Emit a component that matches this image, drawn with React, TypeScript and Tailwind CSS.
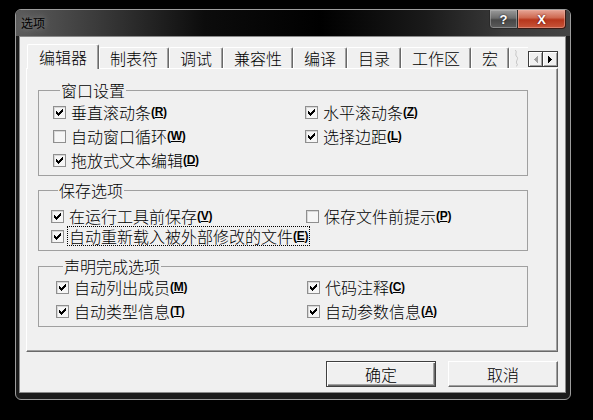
import React from "react";

const CJK = "font-['Noto_Sans_CJK_SC',sans-serif] font-light";

function Check({ checked }: { checked: boolean }) {
  return (
    <span className="flex h-[13px] w-[13px] shrink-0 items-center justify-center border border-[#8f8f8f] bg-[#f6f6f6] shadow-[inset_1px_1px_0_#d8d8d8]">
      {checked ? (
        <svg width="7" height="7" viewBox="0 0 7 7" shapeRendering="crispEdges">
          <rect x="6" y="0" width="1" height="1" fill="#000" />
          <rect x="5" y="1" width="2" height="1" fill="#000" />
          <rect x="0" y="2" width="1" height="1" fill="#000" />
          <rect x="4" y="2" width="3" height="1" fill="#000" />
          <rect x="0" y="3" width="2" height="1" fill="#000" />
          <rect x="3" y="3" width="3" height="1" fill="#000" />
          <rect x="0" y="4" width="5" height="1" fill="#000" />
          <rect x="1" y="5" width="3" height="1" fill="#000" />
          <rect x="2" y="6" width="1" height="1" fill="#000" />
        </svg>
      ) : null}
    </span>
  );
}

function Mn({ k }: { k: string }) {
  return (
    <span className="font-['Liberation_Sans',Arial,sans-serif] text-[12px] font-bold leading-none tracking-[-0.3px]">
      (<span className="underline underline-offset-[1px]">{k}</span>)
    </span>
  );
}

type O = { label: string; k: string; checked: boolean; focus?: boolean } | null;

function Opt({ o, h }: { o: O; h: string }) {
  if (!o) return <div className={h} />;
  return (
    <div className={"flex items-center whitespace-nowrap " + h}>
      <Check checked={o.checked} />
      <span
        className={
          "ml-[3px] flex shrink-0 items-center whitespace-nowrap px-[1px] text-[16px] leading-[16px] " +
          (o.focus ? "h-[20px] border border-dotted border-black" : "h-[18px] border border-transparent")
        }
      >
        {o.label}
        <Mn k={o.k} />
      </span>
    </div>
  );
}

const tabs = [
  { t: "编辑器", sel: true },
  { t: "制表符" },
  { t: "调试" },
  { t: "兼容性" },
  { t: "编译" },
  { t: "目录" },
  { t: "工作区" },
  { t: "宏" },
];

export default function App() {
  return (
    <div className={"h-[420px] w-[593px] overflow-hidden bg-black pl-[15px] pt-[9px] text-black " + CJK}>
      <div className="flex h-[391px] w-[556px] flex-col overflow-hidden rounded-[6px] border border-[#9c9c9c] bg-[#1c1c1c]">
        {/* title bar */}
        <div className="flex h-[26px] shrink-0 items-start bg-[linear-gradient(90deg,#5c5c5c_0%,#3c3c3c_14%,#0c0c0c_34%,#000_55%,#1a1a1a_74%,#3a3a3a_88%,#444_100%)]">
          <div className="flex h-[26px] items-center pl-[5px] text-[12px] font-normal leading-[12px] text-black [text-shadow:0_0_6px_#9a9a9a]">
            选项
          </div>
          <div className="ml-auto mr-[4px] -mt-[1px] flex">
            <div className="flex h-[20px] w-[29px] items-center justify-center rounded-bl-[4px] border border-[#2a2a2a] bg-[linear-gradient(180deg,#9a9a9a_0%,#6c6c6c_45%,#474747_55%,#5c5c5c_100%)] shadow-[inset_0_0_0_1px_#b8b8b880] font-['Liberation_Sans',sans-serif] text-[13px] font-bold leading-none text-white [text-shadow:0_0_2px_#000]">
              ?
            </div>
            <div className="flex h-[20px] w-[48px] items-center justify-center rounded-br-[4px] border border-l-0 border-[#3a1a14] bg-[linear-gradient(180deg,#e6a596_0%,#cf6a52_42%,#b7361c_55%,#c8553a_100%)] shadow-[inset_0_0_0_1px_#f0b0a080] font-['Liberation_Sans',sans-serif] text-[13px] font-bold leading-none text-white [text-shadow:0_0_2px_#400]">
              X
            </div>
          </div>
        </div>
        {/* client */}
        <div className="ml-[3px] h-[357px] w-[547px] border border-[#8a8a8a] bg-[#f0f0f0] pl-[6px] pt-[7px]">
          <div className="w-[532px]">
            {/* tab header */}
            <div className="flex h-[24px] items-end pl-[1px]">
              {tabs.map((tab) =>
                tab.sel ? (
                  <div
                    key={tab.t}
                    className="relative z-10 -mb-px flex h-[25px] items-center rounded-t-[2px] border-l border-r border-t border-l-white border-r-[#696969] border-t-white bg-[#f0f0f0] px-[11px] text-[16px] leading-[16px] shadow-[inset_-1px_0_0_#a0a0a0]"
                  >
                    {tab.t}
                  </div>
                ) : (
                  <div
                    key={tab.t}
                    className="flex h-[21px] items-center rounded-t-[2px] border-l border-r border-t border-l-white border-r-[#696969] border-t-white bg-[#f0f0f0] px-[10px] text-[16px] leading-[16px] shadow-[inset_-1px_0_0_#a0a0a0]"
                  >
                    {tab.t}
                  </div>
                )
              )}
              <div className="flex h-[21px] w-[19px] items-center overflow-hidden rounded-tl-[2px] border-l border-t border-l-white border-t-white pl-[3px]">
                <svg width="8" height="18" viewBox="0 0 8 18">
                  <path d="M2 1 C5 3 1 5 4 8 C6 10 2 12 4 15 C5 16 4 17 3 17" stroke="#c4c4c4" strokeWidth="1" fill="none" />
                </svg>
              </div>
              <div className="mb-[1px] flex h-[16px]">
                <div className="flex h-[16px] w-[15px] items-center justify-center border border-[#3c3c3c] bg-[#f0f0f0] shadow-[inset_1px_1px_0_#fff,inset_-1px_-1px_0_#a0a0a0]">
                  <svg width="4" height="7" viewBox="0 0 4 7" shapeRendering="crispEdges">
                    <path d="M4 0 L0 3.5 L4 7 Z" fill="#a0a0a0" />
                  </svg>
                </div>
                <div className="flex h-[16px] w-[15px] items-center justify-center border border-l-0 border-[#3c3c3c] bg-[#f0f0f0] shadow-[inset_1px_1px_0_#fff,inset_-1px_-1px_0_#a0a0a0]">
                  <svg width="4" height="7" viewBox="0 0 4 7" shapeRendering="crispEdges">
                    <path d="M0 0 L4 3.5 L0 7 Z" fill="#000" />
                  </svg>
                </div>
              </div>
            </div>
            {/* tab panel */}
            <div className="h-[284px] border border-b-[#696969] border-l-white border-r-[#696969] border-t-white pt-[13px] shadow-[inset_-1px_-1px_0_#a0a0a0]">
              <fieldset className="ml-[11px] w-[490px] border border-[#a0a0a0] pb-[3px] pl-[14px] pt-[2px]">
                <legend className="ml-[7px] px-[1px] text-[16px] leading-[16px]">窗口设置</legend>
                <div className="grid grid-cols-[252px_1fr]">
                  <Opt h="h-[24px]" o={{ label: "垂直滚动条", k: "R", checked: true }} />
                  <Opt h="h-[24px]" o={{ label: "水平滚动条", k: "Z", checked: true }} />
                  <Opt h="h-[24px]" o={{ label: "自动窗口循环", k: "W", checked: false }} />
                  <Opt h="h-[24px]" o={{ label: "选择边距", k: "L", checked: true }} />
                  <Opt h="h-[24px]" o={{ label: "拖放式文本编辑", k: "D", checked: true }} />
                  <Opt h="h-[24px]" o={null} />
                </div>
              </fieldset>
              <fieldset className="ml-[11px] mt-[6px] w-[490px] border border-[#a0a0a0] pb-[4px] pl-[12px] pt-[8px]">
                <legend className="ml-[7px] px-[1px] text-[16px] leading-[16px]">保存选项</legend>
                <div className="grid grid-cols-[255px_1fr]">
                  <Opt h="h-[20px]" o={{ label: "在运行工具前保存", k: "V", checked: true }} />
                  <Opt h="h-[20px]" o={{ label: "保存文件前提示", k: "P", checked: false }} />
                  <div className="col-span-2">
                    <Opt h="h-[20px]" o={{ label: "自动重新载入被外部修改的文件", k: "E", checked: true, focus: true }} />
                  </div>
                </div>
              </fieldset>
              <fieldset className="ml-[11px] mt-[7px] w-[490px] border border-[#a0a0a0] pb-[3px] pl-[17px] pt-[1px]">
                <legend className="ml-[7px] px-[1px] text-[16px] leading-[16px]">声明完成选项</legend>
                <div className="grid grid-cols-[251px_1fr]">
                  <Opt h="h-[24px]" o={{ label: "自动列出成员", k: "M", checked: true }} />
                  <Opt h="h-[24px]" o={{ label: "代码注释", k: "C", checked: true }} />
                  <Opt h="h-[24px]" o={{ label: "自动类型信息", k: "T", checked: true }} />
                  <Opt h="h-[24px]" o={{ label: "自动参数信息", k: "A", checked: true }} />
                </div>
              </fieldset>
            </div>
            {/* buttons */}
            <div className="mt-[9px] flex justify-end gap-[12px]">
              <button className="flex h-[26px] w-[110px] items-center justify-center border border-[#404040] bg-[#f0f0f0] text-[16px] leading-[16px] shadow-[inset_1px_1px_0_#fff,inset_-1px_-1px_0_#696969,inset_-2px_-2px_0_#a0a0a0]">
                确定
              </button>
              <button className="flex h-[26px] w-[110px] items-center justify-center border border-b-[#696969] border-l-white border-r-[#696969] border-t-white bg-[#f0f0f0] text-[16px] leading-[16px] shadow-[inset_-1px_-1px_0_#a0a0a0]">
                取消
              </button>
            </div>
          </div>
        </div>
      </div>
    </div>
  );
}
